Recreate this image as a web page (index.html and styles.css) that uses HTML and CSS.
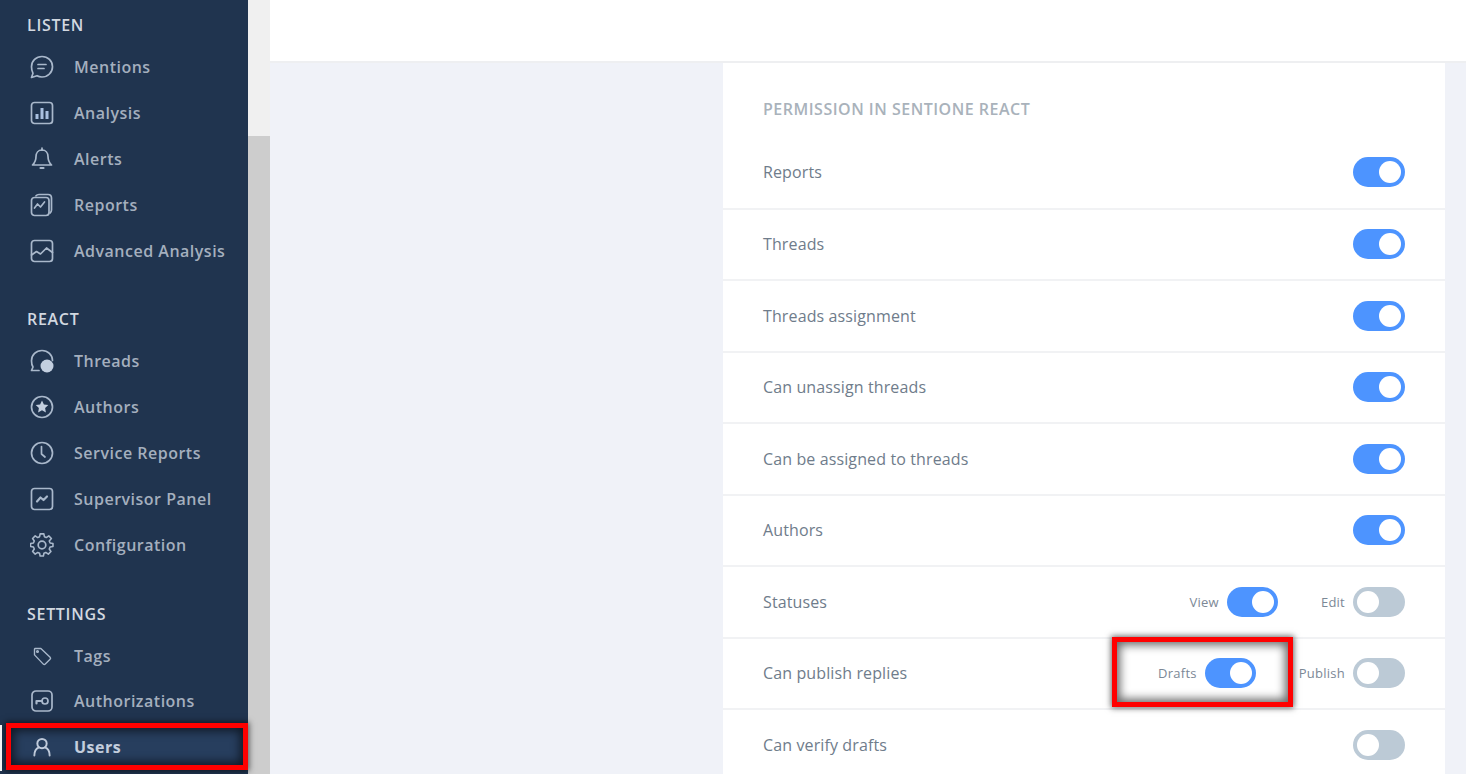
FILE: index.html
```html
<!DOCTYPE html>
<html lang="en">
<head>
<meta charset="utf-8">
<title>Users</title>
<link rel="stylesheet" href="styles.css">
</head>
<body>
<div class="app">
  <nav class="sidebar">
    <section class="group">
      <h2 class="group-title">LISTEN</h2>
      <a class="item"><svg class="ico" viewBox="0 0 24 24"><path d="M12 1.500c5.800 0 10.500 4.500 10.500 10.200S17.800 22 12 22c-2 0-3.600-.4-5-1.300L1.500 22.500 3 18.300C2 16.400 1.500 14 1.500 11.700 1.500 6 6.200 1.500 12 1.500z"/><path d="M8 9.500h8M8 13.500h6"/></svg><span>Mentions</span></a>
      <a class="item"><svg class="ico" viewBox="0 0 24 24"><rect x="1.500" y="1.500" width="21" height="21" rx="3"/><path class="bars" d="M7 18v-5M12 18V7M17 18v-8"/></svg><span>Analysis</span></a>
      <a class="item"><svg class="ico" viewBox="0 0 24 24"><path d="M12 3c-3.800 0-6 3-6 6.500 0 4-1 6-3.500 8.500h19C19 15.500 18 13.500 18 9.500 18 6 15.800 3 12 3zM12 1v2"/><path class="fat" d="M10.500 21h3"/></svg><span>Alerts</span></a>
      <a class="item"><svg class="ico" viewBox="0 0 24 24"><rect x="1.500" y="4.500" width="17.500" height="18" rx="3"/><path d="M6 2.800C6.800 1.800 7.800 1.500 9 1.500h9c2.500 0 3.500 1.500 3.500 3.500v12c0 1.200-.5 2.200-1.500 3"/><path d="M4.500 15l3-4 3 3 4-5"/></svg><span>Reports</span></a>
      <a class="item"><svg class="ico" viewBox="0 0 24 24"><rect x="1.500" y="1.500" width="21" height="21" rx="3"/><path d="M1.500 16l5-3.500 4 2.500 6-6 6 4.500"/></svg><span>Advanced Analysis</span></a>
    </section>
    <section class="group">
      <h2 class="group-title">REACT</h2>
      <a class="item"><svg class="ico" viewBox="0 0 24 24"><path d="M9 21.500H1.500L3 18C2 16.400 1.500 14 1.500 11.700 1.500 6 6.200 1.500 12 1.500s10.500 4.500 10.500 10"/><circle class="solid" cx="17" cy="17" r="6.500"/></svg><span>Threads</span></a>
      <a class="item"><svg class="ico" viewBox="0 0 24 24"><circle cx="12" cy="12" r="10.500"/><path class="solid" d="M12 5.500l1.900 4 4.400.6-3.200 3 .8 4.400-3.900-2.200-3.900 2.200.8-4.400-3.200-3 4.400-.6z"/></svg><span>Authors</span></a>
      <a class="item"><svg class="ico" viewBox="0 0 24 24"><circle cx="12" cy="12" r="10.500"/><path d="M11.500 5.500V13l3.500 3"/></svg><span>Service Reports</span></a>
      <a class="item"><svg class="ico" viewBox="0 0 24 24"><rect x="1.500" y="1.500" width="21" height="21" rx="3"/><path class="fat" d="M7 14.500l3.500-4 3 2.500 3.500-3.500"/></svg><span>Supervisor Panel</span></a>
      <a class="item"><svg class="ico" viewBox="0 0 24 24"><circle cx="12" cy="12" r="3.800"/><path d="M10 1h4l.6 3.100 2 .9 2.700-1.800 2.800 2.800L19.800 8.700l.9 2.100 3.100.6v3.200l-3.100.6-.9 2.100 1.800 2.700-2.800 2.800-2.700-1.800-2 .9-.6 3H10l-.6-3-2-.9-2.700 1.800-2.800-2.800 1.800-2.700-.9-2.100-3.100-.6v-3.200l3.100-.6.9-2.100L1.900 6l2.800-2.800L7.400 5l2-.9z" transform="translate(12 12) scale(.93) translate(-12 -13)"/></svg><span>Configuration</span></a>
    </section>
    <section class="group group-settings">
      <h2 class="group-title">SETTINGS</h2>
      <a class="item item-short"><svg class="ico" viewBox="0 0 24 24"><path d="M3 2.500h7.500L22 13.500c.8.800.8 1.700 0 2.500l-6 6c-.8.800-1.700.8-2.500 0L2.500 10.500V3z" transform="translate(2.500 2.500) scale(.8)"/><circle cx="7.500" cy="7.500" r=".7"/></svg><span>Tags</span></a>
      <a class="item"><svg class="ico" viewBox="0 0 24 24"><rect x="2" y="2" width="20" height="20" rx="4"/><circle cx="15" cy="12" r="3"/><path class="fat" d="M12 12H6.500v2.500"/></svg><span>Authorizations</span></a>
      <a class="item item-active"><svg class="ico" viewBox="0 0 24 24"><circle cx="12" cy="8" r="5.500"/><path d="M3 22c0-5 3-8.500 5.500-9.500M21 22c0-5-3-8.500-5.500-9.500"/></svg><span>Users</span></a>
    </section>
  </nav>
  <div class="strip"><div class="strip-top"></div></div>
  <div class="main">
    <header class="topbar"></header>
    <div class="content">
      <div class="card">
        <h3 class="card-title">PERMISSION IN SENTIONE REACT</h3>
        <div class="row row-first"><span class="row-label">Reports</span><span class="switch on"></span></div>
        <div class="row"><span class="row-label">Threads</span><span class="switch on"></span></div>
        <div class="row"><span class="row-label">Threads assignment</span><span class="switch on"></span></div>
        <div class="row"><span class="row-label">Can unassign threads</span><span class="switch on"></span></div>
        <div class="row"><span class="row-label">Can be assigned to threads</span><span class="switch on"></span></div>
        <div class="row"><span class="row-label">Authors</span><span class="switch on"></span></div>
        <div class="row"><span class="row-label">Statuses</span>
          <span class="opt opt-view"><small>View</small><span class="switch on"></span></span>
          <span class="opt opt-edit"><small>Edit</small><span class="switch"></span></span>
        </div>
        <div class="row"><span class="row-label">Can publish replies</span>
          <span class="opt opt-drafts"><small>Drafts</small><span class="switch on"></span></span>
          <span class="opt opt-publish"><small>Publish</small><span class="switch"></span></span>
        </div>
        <div class="row row-last"><span class="row-label">Can verify drafts</span><span class="switch"></span></div>
      </div>
    </div>
  </div>
</div>
<div class="mark mark-users"></div>
<div class="mark mark-drafts"></div>
<div class="edge"></div>
</body>
</html>
```
FILE: styles.css
```css
* { box-sizing: border-box; }
html, body { margin: 0; height: 774px; overflow: hidden; background: #f0f2f8; }
body { font-family: "Open Sans", "Liberation Sans", sans-serif; position: relative; }

.app { display: flex; height: 774px; overflow: hidden; }

.sidebar { width: 248px; flex: none; background: #20344f; padding-top: 15px; overflow: hidden; }
.group-title { margin: 0 0 8px 27px; font-size: 16px; line-height: 21px; font-weight: 600; color: #d2d8e0; letter-spacing: .7px; }
.group { margin-bottom: 35px; }
.group-settings { padding-top: 1px; margin-bottom: 0; }
.group-settings .group-title { margin-bottom: 9px; }
.item { display: flex; align-items: center; height: 46px; padding-left: 30px; color: #a4afbe; font-size: 16px; font-weight: 600; letter-spacing: .5px; }
.item-short { height: 44px; }
.item span { margin-left: 20px; }
.item-active { color: #f2f5f9; font-weight: 700; }
.ico { width: 24px; height: 24px; flex: none; fill: none; stroke: #a9b8cb; stroke-width: 1.700; stroke-linejoin: round; stroke-linecap: round; }
.ico .fat { stroke-width: 2.200; }
.ico .bars { stroke: #a9c0e0; stroke-width: 3; stroke-linecap: butt; }
.ico .solid { fill: #c3cfe0; stroke: none; }
.item-active .ico { stroke: #eef2f7; stroke-width: 2.300; transform: scale(.85); }

.strip { width: 22px; flex: none; background: #cdcdcd; }
.strip-top { height: 136px; background: #f0f0f0; }

.main { flex: 1; min-width: 0; display: flex; flex-direction: column; }
.topbar { height: 63px; flex: none; background: #fff; border-bottom: 2px solid #eeeff1; }
.content { flex: 1; display: flex; justify-content: flex-end; padding-right: 21px; min-height: 0; }
.card { width: 722px; flex: none; background: #fff; padding-top: 35px; }
.card-title { margin: 0 0 0 40px; font-size: 16px; line-height: 22px; font-weight: 600; color: #a9b2bb; letter-spacing: .5px; }

.row { display: flex; align-items: center; height: 71.500px; padding: 0 40px; border-bottom: 2px solid #f1f2f4; }
.row-first { height: 89.500px; padding-top: 16.500px; }
.row-last { border-bottom-color: transparent; }
.row-label { font-size: 16px; letter-spacing: .12px; color: #6f7c8b; margin-right: auto; }

.opt { display: flex; align-items: center; }
.opt small { font-size: 13px; letter-spacing: .25px; color: #7c8896; margin-right: 8px; }
.opt-view { margin-right: 43px; }
.opt-drafts { margin-right: 43px; }
.opt-view .switch, .opt-drafts .switch { width: 51px; }

.switch { position: relative; display: block; width: 52px; height: 30px; flex: none; border-radius: 15px; background: #bccad6; }
.switch::after { content: ""; position: absolute; top: 4px; left: 4px; width: 22px; height: 22px; border-radius: 50%; background: #fff; }
.switch.on { background: #4d94ff; }
.switch.on::after { left: auto; right: 4px; }

.mark { position: absolute; border: 5px solid #f00; box-shadow: 0 0 6px 1px rgba(0,0,0,.6), inset 0 0 10px 3px rgba(0,0,0,.6); pointer-events: none; }
.mark-users { left: 6px; top: 723px; width: 242px; height: 47px; background: rgba(60,90,140,.25); }
.mark-drafts { left: 1112px; top: 637px; width: 181px; height: 70px; }
.edge { position: absolute; left: 0; top: 725px; width: 2px; height: 46px; background: #f4f4f4; }
```
